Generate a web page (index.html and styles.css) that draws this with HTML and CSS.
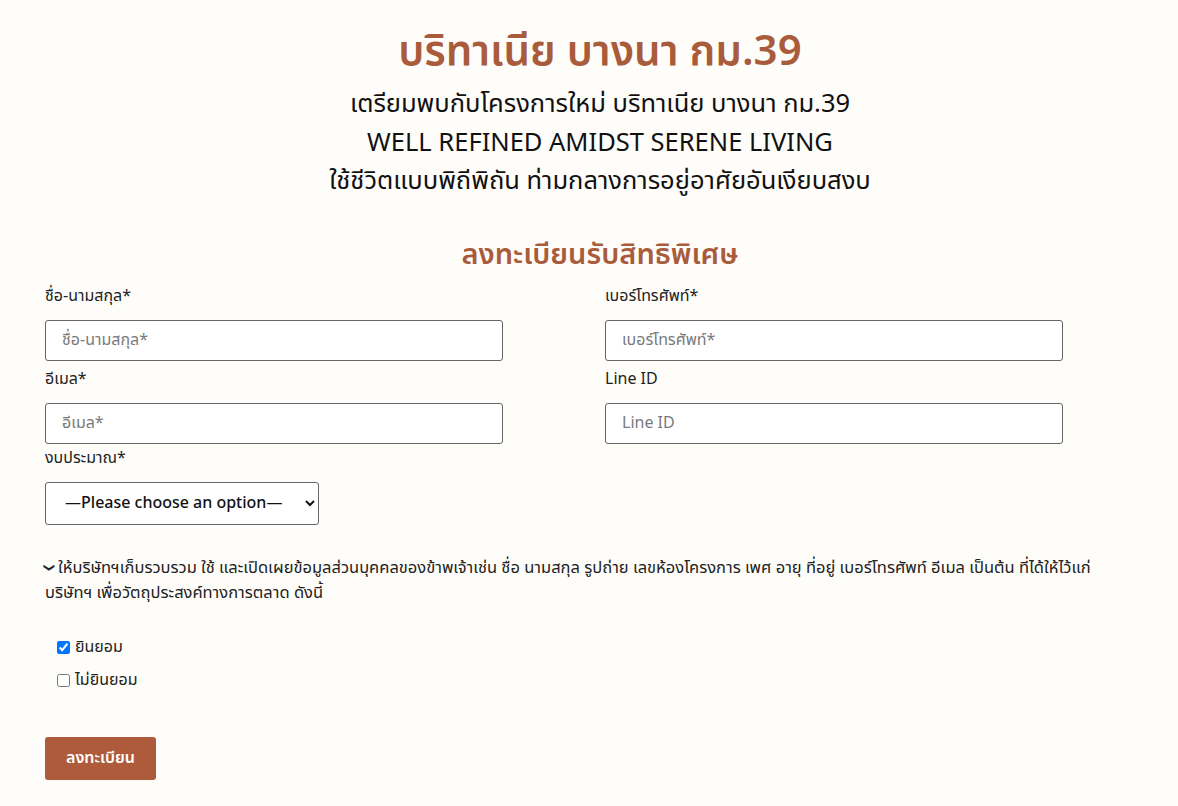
FILE: index.html
```html
<!DOCTYPE html>
<html lang="th">
<head>
    <meta charset="UTF-8">
    <meta name="viewport" content="width=device-width, initial-scale=1.0">
    <title>บริทาเนีย บางนา กม.39</title>
    <link rel="stylesheet" href="styles.css">
</head>
<body>
    <div class="container">
        <div class="intro">
            <h1 class="title">บริทาเนีย บางนา กม.39</h1>
            <p class="tagline">เตรียมพบกับโครงการใหม่ บริทาเนีย บางนา กม.39</p>
            <p class="tagline">WELL REFINED AMIDST SERENE LIVING</p>
            <p class="tagline">ใช้ชีวิตแบบพิถีพิถัน ท่ามกลางการอยู่อาศัยอันเงียบสงบ</p>
        </div>

        <form class="register" onsubmit="return false;">
            <h2 class="form-title">ลงทะเบียนรับสิทธิพิเศษ</h2>

            <div class="grid">
                <div class="field">
                    <label for="name">ชื่อ-นามสกุล*</label>
                    <input type="text" id="name" placeholder="ชื่อ-นามสกุล*">
                </div>
                <div class="field">
                    <label for="phone">เบอร์โทรศัพท์*</label>
                    <input type="tel" id="phone" placeholder="เบอร์โทรศัพท์*">
                </div>
                <div class="field">
                    <label for="email">อีเมล*</label>
                    <input type="email" id="email" placeholder="อีเมล*">
                </div>
                <div class="field">
                    <label for="line">Line ID</label>
                    <input type="text" id="line" placeholder="Line ID">
                </div>
                <div class="field field-budget">
                    <label for="budget">งบประมาณ*</label>
                    <select id="budget">
                        <option>—Please choose an option—</option>
                        <option>2 - 3 ล้านบาท</option>
                        <option>3 - 4 ล้านบาท</option>
                        <option>4 ล้านบาทขึ้นไป</option>
                    </select>
                </div>
            </div>

            <p class="consent-text"><span class="chev">&#10095;</span>ให้บริษัทฯเก็บรวบรวม ใช้ และเปิดเผยข้อมูลส่วนบุคคลของข้าพเจ้าเช่น ชื่อ นามสกุล รูปถ่าย เลขห้องโครงการ เพศ อายุ ที่อยู่ เบอร์โทรศัพท์ อีเมล เป็นต้น ที่ได้ให้ไว้แก่ บริษัทฯ เพื่อวัตถุประสงค์ทางการตลาด ดังนี้</p>

            <div class="choices">
                <label class="check"><input type="checkbox" checked> ยินยอม</label>
                <label class="check"><input type="checkbox"> ไม่ยินยอม</label>
            </div>

            <button type="submit" class="submit">ลงทะเบียน</button>
        </form>
    </div>
</body>
</html>
```

FILE: styles.css
```css
body {
    font-family: "Noto Sans Thai", "Noto Sans", sans-serif;
    margin: 0;
    background: #fffdf9;
    color: #222;
}
.container {
    width: 1110px;
    padding: 25px 0 0 45px;
}
.intro {
    text-align: center;
}
.title {
    margin: 0 0 6px;
    font-size: 42px;
    font-weight: 600;
    color: #a95c3c;
    line-height: 54px;
}
.tagline {
    margin: 0;
    font-size: 25.5px;
    line-height: 38.5px;
    color: #111;
}
.form-title {
    margin: 36px 0 10px;
    text-align: center;
    font-size: 29px;
    font-weight: 600;
    color: #a95c3c;
    line-height: 36px;
}
.grid {
    display: grid;
    grid-template-columns: 560px 560px;
    row-gap: 5px;
}
.field label {
    display: block;
    font-size: 16px;
    line-height: 26px;
    margin-bottom: 11px;
    color: #222;
}
.field-budget {
    margin-top: -4px;
}
.field input {
    display: block;
    box-sizing: border-box;
    width: 458px;
    height: 41px;
    padding: 0 16px;
    font-family: inherit;
    font-size: 16px;
    border: 1px solid #666;
    border-radius: 3px;
    background: #fff;
}
.field input::placeholder {
    color: #7a7a7a;
}
.field select {
    box-sizing: border-box;
    width: 274px;
    height: 43px;
    padding: 0 12px 0 15px;
    font-family: inherit;
    font-size: 16px;
    font-weight: 500;
    border: 1px solid #666;
    border-radius: 3px;
    background: #fff;
    color: #111;
}
.consent-text {
    margin: 30px 0 0;
    max-width: 1050px;
    font-size: 16.5px;
    line-height: 25px;
    color: #222;
}
.chev {
    display: inline-block;
    transform: rotate(90deg);
    font-size: 11px;
    margin-right: 4px;
    vertical-align: 2px;
}
.choices {
    margin-top: 26px;
    padding-left: 12px;
}
.check {
    display: flex;
    align-items: center;
    gap: 5px;
    font-size: 16px;
    line-height: 33px;
    color: #222;
}
.check input {
    margin: 0;
    width: 13px;
    height: 13px;
}
.submit {
    margin-top: 40px;
    padding: 0 21px;
    height: 43px;
    border: none;
    border-radius: 3px;
    background: #ad5b3b;
    color: #fff;
    font-family: inherit;
    font-size: 16px;
    font-weight: 600;
    cursor: pointer;
}
```
